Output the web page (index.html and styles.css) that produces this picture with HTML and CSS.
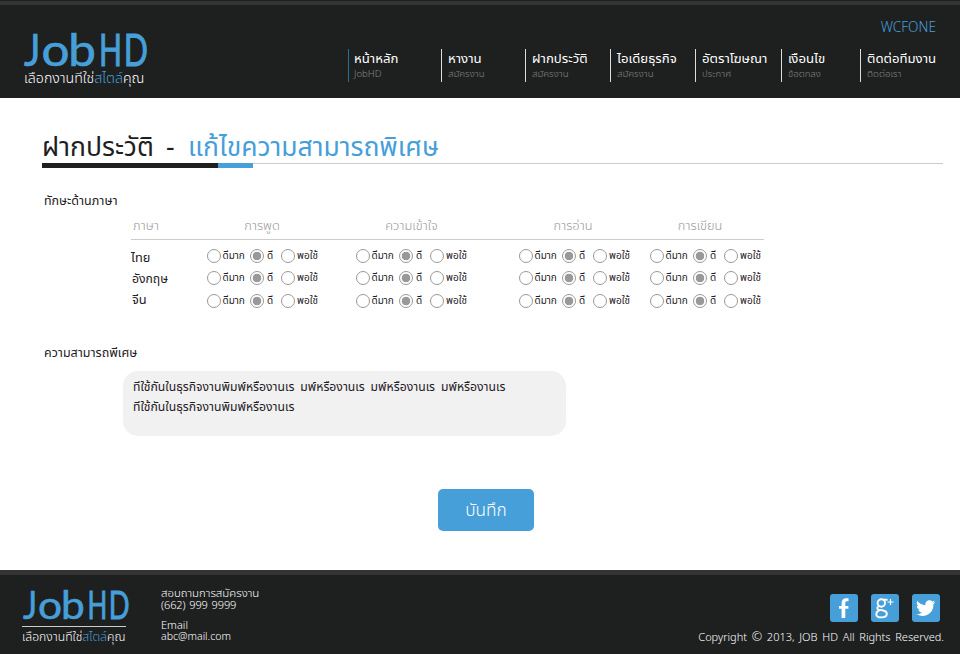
FILE: index.html
```
<!DOCTYPE html>
<html lang="th">
<head>
<meta charset="utf-8">
<title>JobHD</title>
<link rel="stylesheet" href="styles.css">
</head>
<body>
<header class="header">
  <div class="brand">
    <svg class="logo" viewBox="0 0 126 36"><text y="33.5"><tspan x="1" textLength="16.5" lengthAdjust="spacingAndGlyphs">J</tspan><tspan x="18.6" textLength="28" lengthAdjust="spacingAndGlyphs">o</tspan><tspan x="45.2" textLength="27.6" lengthAdjust="spacingAndGlyphs">b</tspan><tspan class="wide" x="76" textLength="23" lengthAdjust="spacingAndGlyphs">H</tspan><tspan class="wide" x="100.7" textLength="24.2" lengthAdjust="spacingAndGlyphs">D</tspan></text></svg>
    <p class="tagline">เลือกงานทีใช่<span class="accent">สไตล์</span>คุณ</p>
  </div>
  <div class="header-right">
    <div class="user">WCFONE</div>
    <nav class="nav">
      <a class="nav-item current"><b>หน้าหลัก</b><small>JobHD</small></a>
      <a class="nav-item"><b>หางาน</b><small>สมัครงาน</small></a>
      <a class="nav-item"><b>ฝากประวัติ</b><small>สมัครงาน</small></a>
      <a class="nav-item"><b>ไอเดียธุรกิจ</b><small>สมัครงาน</small></a>
      <a class="nav-item"><b>อัตราโฆษณา</b><small>ประกาศ</small></a>
      <a class="nav-item"><b>เงือนไข</b><small>ข้อตกลง</small></a>
      <a class="nav-item"><b>ติดต่อทีมงาน</b><small>ติดต่อเรา</small></a>
    </nav>
  </div>
</header>
<main class="main">
  <h1 class="title"><span class="title-dark">ฝากประวัติ</span><span class="dash">-</span><span class="accent">แก้ไขความสามารถพิเศษ</span></h1>
  <div class="rule"><i class="rule-dark"></i><i class="rule-blue"></i></div>
  <h2 class="label">ทักษะด้านภาษา</h2>
  <section class="skills">
    <div class="skills-head"><span>ภาษา</span><span>การพูด</span><span>ความเข้าใจ</span><span>การอ่าน</span><span>การเขียน</span></div>
    <div class="skills-row r1"><span class="lang">ไทย</span>
      <div class="opts"><i></i><span>ดีมาก</span><i class="on"></i><span>ดี</span><i></i><span>พอใช้</span></div>
      <div class="opts"><i></i><span>ดีมาก</span><i class="on"></i><span>ดี</span><i></i><span>พอใช้</span></div>
      <div class="opts"><i></i><span>ดีมาก</span><i class="on"></i><span>ดี</span><i></i><span>พอใช้</span></div>
      <div class="opts"><i></i><span>ดีมาก</span><i class="on"></i><span>ดี</span><i></i><span>พอใช้</span></div>
    </div>
    <div class="skills-row r2"><span class="lang">อังกฤษ</span>
      <div class="opts"><i></i><span>ดีมาก</span><i class="on"></i><span>ดี</span><i></i><span>พอใช้</span></div>
      <div class="opts"><i></i><span>ดีมาก</span><i class="on"></i><span>ดี</span><i></i><span>พอใช้</span></div>
      <div class="opts"><i></i><span>ดีมาก</span><i class="on"></i><span>ดี</span><i></i><span>พอใช้</span></div>
      <div class="opts"><i></i><span>ดีมาก</span><i class="on"></i><span>ดี</span><i></i><span>พอใช้</span></div>
    </div>
    <div class="skills-row r3"><span class="lang">จีน</span>
      <div class="opts"><i></i><span>ดีมาก</span><i class="on"></i><span>ดี</span><i></i><span>พอใช้</span></div>
      <div class="opts"><i></i><span>ดีมาก</span><i class="on"></i><span>ดี</span><i></i><span>พอใช้</span></div>
      <div class="opts"><i></i><span>ดีมาก</span><i class="on"></i><span>ดี</span><i></i><span>พอใช้</span></div>
      <div class="opts"><i></i><span>ดีมาก</span><i class="on"></i><span>ดี</span><i></i><span>พอใช้</span></div>
    </div>
  </section>
  <h2 class="label special">ความสามารถพีเศษ</h2>
  <div class="textbox">ทีใช้กันในธุรกิจงานพิมพ์หรืองานเร มพ์หรืองานเร มพ์หรืองานเร มพ์หรืองานเร<br>ทีใช้กันในธุรกิจงานพิมพ์หรืองานเร</div>
  <button class="save">บันทึก</button>
</main>
<footer class="footer">
  <div class="brand-small">
    <svg class="logo" viewBox="0 0 126 36"><text y="33.5"><tspan x="1" textLength="16.5" lengthAdjust="spacingAndGlyphs">J</tspan><tspan x="18.6" textLength="28" lengthAdjust="spacingAndGlyphs">o</tspan><tspan x="45.2" textLength="27.6" lengthAdjust="spacingAndGlyphs">b</tspan><tspan class="wide" x="76" textLength="23" lengthAdjust="spacingAndGlyphs">H</tspan><tspan class="wide" x="100.7" textLength="24.2" lengthAdjust="spacingAndGlyphs">D</tspan></text></svg>
    <p class="tagline">เลือกงานทีใช่<span class="accent">สไตล์</span>คุณ</p>
  </div>
  <address class="contact">
    <p class="ask">สอบถามการสมัครงาน</p><p class="phone">(662) 999 9999</p>
    <p class="email">Email</p><p class="mail">abc@mail.com</p>
  </address>
  <div class="footer-right">
    <div class="social">
      <svg viewBox="0 0 28 28"><rect width="28" height="28" rx="3"/><path d="M11.600 24V14.700H9v-2.700h2.600V9.400c0-3.400 1.600-5.200 4.900-5.200h2v3h-1.400c-1.500 0-1.800.6-1.800 2v2.800h3.100v2.700h-3.100V24z"/></svg>
      <svg viewBox="0 0 28 28"><rect width="28" height="28" rx="3"/><g class="line"><ellipse cx="10.300" cy="9" rx="3.700" ry="3.700"/><path d="M12 5.700h4.500M7.500 12.200c-1.700 1.400-1.700 3 .3 3.400l3.500.6c2.700.5 4.500 1.300 4.500 3.500 0 2.500-2.600 3.700-5.500 3.700s-5-1.100-5-3.200c0-2 1.500-3.300 3.500-4"/></g><path class="plus" d="M19.500 5v6M16.500 8h6"/></svg>
      <svg viewBox="0 0 28 28"><rect width="28" height="28" rx="3"/><path d="M4.200 20.100c2.100.2 4.100-.4 5.700-1.700-1.800-.1-3.200-1.200-3.700-2.700h1.700c-1.900-.5-3.100-2-3.100-3.900l1.700.4C4.700 10.900 4.300 8.800 5.300 7c2.100 2.500 4.900 4 8.200 4.200-.6-2.700 1.300-4.900 3.900-4.900 1.200 0 2.200.5 2.900 1.200l2.500-.9-1.700 2.200 2.300-.6-2 2.100c.3 6.800-4.500 11.600-10.800 11.600-2.300 0-4.600-.6-6.400-1.800z"/></svg>
    </div>
    <p class="copyright">Copyright <span class="copy">©</span> 2013, JOB HD All Rights Reserved.</p>
  </div>
</footer>
</body>
</html>
```
FILE: styles.css
```
* { box-sizing: border-box; margin: 0; padding: 0; }
body {
  width: 960px; height: 654px; overflow: hidden;
  display: flex; flex-direction: column;
  background: #fff; color: #1e201f; white-space: nowrap;
  font-family: "Noto Sans Thai", "Noto Sans", sans-serif;
  font-weight: 350;
}
.accent { color: #469fd9; }

.header {
  height: 98px; flex: none; display: flex;
  background: linear-gradient(#1e201f 1px, #353435 1px 5px, #1e201f 5px);
}
.brand { width: 348px; padding: 32px 0 0 23px; }
.logo { display: block; width: 126px; height: 36px; overflow: visible; }
.logo text {
  font: 400 45px Lato, sans-serif;
  fill: #469fd9; stroke: #469fd9; stroke-width: .7px;
}
.logo .wide { stroke-width: 1.100px; }
.tagline { color: #fff; font-size: 14.200px; line-height: 20px; margin-top: 1px; padding-left: 1px; }
.header-right { flex: 1; }
.user {
  height: 49px; padding: 18px 24px 0 0;
  text-align: right; color: #469fd9; font-size: 13.600px; font-weight: 350; line-height: 20px;
}
.nav { display: grid; grid-template-columns: 93px 84px 85px 85px 86px 79px 99px; }
.nav-item { height: 33px; border-left: 1px solid #ddd; padding-left: 6px; }
.nav-item.current { border-color: #2b6c98; padding-left: 5px; }
.nav-item b {
  display: block; font-size: 13.200px; font-weight: 400; line-height: 20px; color: #fff;
}
.nav-item small { display: block; font-size: 9.600px; line-height: 10px; color: #858585; }

.main { height: 472px; flex: none; padding-left: 42px; }
.title {
  display: flex; height: 65px; padding-top: 30px;
  font-size: 26.500px; font-weight: 375; line-height: 40px;
}
.dash { width: 33px; padding-left: 11px; }
.title-dark { width: 113px; }
.rule { display: flex; width: 901px; height: 5px; border-top: 1px solid #ccc; }
.rule i { height: 5px; margin-top: -1px; }
.rule-dark { width: 176px; background: #1e201f; }
.rule-blue { width: 35px; background: #469fd9; }
.label {
  margin: 24px 0 0 2px; font-size: 12.500px; font-weight: 375; line-height: 20px;
}
.skills { width: 633px; margin-left: 89px; height: 130px; }
.skills-head, .skills-row { display: grid; grid-template-columns: 76px 149px 163px 131px 114px; }
.skills-head {
  height: 28px; border-bottom: 1px solid #ccc; padding-top: 4px;
  color: #999; font-size: 12.800px; line-height: 20px;
}
.skills-head span { text-align: center; }
.skills-head span:first-child { text-align: left; padding-left: 2px; }
.skills-head span:nth-child(2) { padding-right: 39px; }
.skills-head span:nth-child(3) { padding-right: 52px; }
.skills-head span:nth-child(4) { padding-right: 23px; }
.skills-head span:nth-child(5) { padding-right: 14px; }
.skills-row { height: 22px; align-items: center; }
.r1 { margin-top: 6px; }
.r3 { height: 23px; }
.lang { font-size: 12.800px; font-weight: 375; line-height: 20px; }
.r1 .lang { padding-top: 2px; }
.r2 .lang { font-size: 12.200px; }
.r3 .lang { margin-top: -3px; }
.r2 .lang, .r3 .lang { padding-left: 1px; }
.opts {
  display: grid; grid-template-columns: 15.500px 28px 16.500px 14.500px 15.500px 24px; align-items: center;
  font-size: 10px; font-weight: 400; line-height: 16px; height: 16px;
}
.r1 .opts, .r2 .opts { margin-top: -2px; }
.r3 .opts { margin-top: -1px; }
.opts i { width: 14px; height: 14px; margin-left: -.5px; border: 1px solid #999; border-radius: 50%; }
.opts .on { background: radial-gradient(circle, #999 4px, #fff 4.600px); }
.special { margin-top: 2px; }
.textbox {
  width: 443px; height: 65px; margin: 7px 0 0 81px; padding: 6px 10px;
  border-radius: 15px; background: #f1f1f1;
  font-size: 12.200px; font-weight: 375; line-height: 20px; word-spacing: 2.700px;
}
.save {
  display: block; width: 96px; height: 42px; margin: 53px 0 0 396px; padding-top: 2px;
  border: 0; border-radius: 5px; background: #469fd9; color: #fff;
  font: inherit; font-size: 17.300px;
}

.footer {
  height: 84px; flex: none; display: flex; color: #fff;
  background: linear-gradient(#353435 5px, #1e201f 5px);
}
.brand-small { width: 161px; padding: 20px 0 0 22px; }
.brand-small .logo { width: 108.600px; height: 31px; }
.brand-small .tagline {
  width: 104px; margin-top: 5px; padding-left: 0; border-top: 1px solid #ccc; font-size: 12.200px;
}
.contact { font-style: normal; font-size: 11px; line-height: 12px; padding-top: 18px; }
.ask { font-size: 11.400px; }
.phone { letter-spacing: -.1px; word-spacing: 1px; }
.email { margin-top: 8px; }
.mail { font-size: 10.600px; line-height: 10px; }
.footer-right { flex: 1; padding: 24px 16px 0 0; text-align: right; }
.social { display: flex; justify-content: flex-end; gap: 13px; padding-right: 4.500px; }
.social svg { width: 28px; height: 28px; }
.social rect { fill: #469fd9; }
.social path { fill: #fff; }
.social .line, .social .line path { fill: none; stroke: #fff; stroke-width: 1.900px; }
.social .plus { fill: none; stroke: #fff; stroke-width: 1.200px; }
.copyright { margin-top: 6px; font-size: 11px; line-height: 20px; word-spacing: 1.900px; }
.copy { font-size: 12.500px; line-height: 1; }
```
